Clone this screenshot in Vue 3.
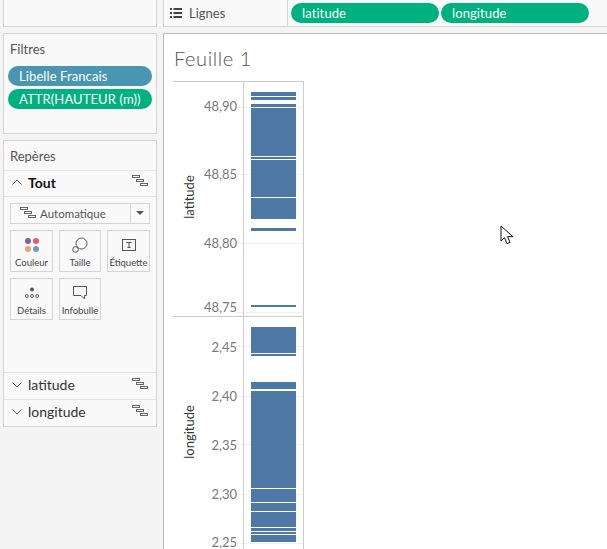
<template>
  <div class="workspace">
    <div class="side">
      <div class="card top-stub"></div>

      <div class="card filters">
        <div class="card-title">Filtres</div>
        <div class="pill blue">Libelle Francais</div>
        <div class="pill green">ATTR(HAUTEUR (m))</div>
      </div>

      <div class="card marks">
        <div class="card-title marks-title">Repères</div>
        <div class="mark-row active">
          <svg class="chev" viewBox="0 0 10 6"><path d="M0.5 5.5 5 1l4.5 4.5" /></svg>
          <span>Tout</span>
          <svg class="gantt" viewBox="0 0 17 12"><use href="#gantt-shape" /></svg>
        </div>

        <div class="mark-body">
          <div class="select">
            <div class="select-value">
              <svg class="gantt small" viewBox="0 0 17 12"><use href="#gantt-shape" /></svg>
              Automatique
            </div>
            <div class="select-arrow"></div>
          </div>

          <div class="tiles">
            <div class="tile">
              <svg viewBox="0 0 16 16" class="tile-icon">
                <circle cx="4" cy="4" r="3" fill="#7b6294" />
                <circle cx="12" cy="4" r="3" fill="#e8596b" />
                <circle cx="4" cy="12" r="3" fill="#eba06f" />
                <circle cx="12" cy="12" r="3" fill="#6d9ac7" />
              </svg>
              <span>Couleur</span>
            </div>
            <div class="tile">
              <svg viewBox="0 0 16 16" class="tile-icon stroke">
                <circle cx="9.500" cy="6.500" r="5.500" />
                <circle cx="3.500" cy="12.500" r="2.800" fill="#f9f9f9" />
              </svg>
              <span>Taille</span>
            </div>
            <div class="tile">
              <svg viewBox="0 0 16 16" class="tile-icon stroke">
                <rect x="1.500" y="2.500" width="13" height="11" />
                <path d="M5.500 6V5.500h5V6M8 5.500v5.500M6.500 10.500h3" />
              </svg>
              <span>Étiquette</span>
            </div>
            <div class="tile">
              <svg viewBox="0 0 16 16" class="tile-icon">
                <circle cx="8" cy="4.500" r="2" fill="#555" />
                <g fill="none" stroke="#555">
                  <circle cx="2.800" cy="11" r="1.500" />
                  <circle cx="8" cy="11" r="1.500" />
                  <circle cx="13.200" cy="11" r="1.500" />
                </g>
              </svg>
              <span>Détails</span>
            </div>
            <div class="tile">
              <svg viewBox="0 0 16 16" class="tile-icon stroke">
                <path d="M1.500 1.500h13v9h-2v3.500l-3.500-3.500H1.500z" />
              </svg>
              <span>Infobulle</span>
            </div>
          </div>
        </div>

        <div class="mark-row field" v-for="name in ['latitude', 'longitude']" :key="name">
          <svg class="chev" viewBox="0 0 10 6"><path d="M0.5 0.5 5 5l4.500-4.500" /></svg>
          <span>{{ name }}</span>
          <svg class="gantt" viewBox="0 0 17 12"><use href="#gantt-shape" /></svg>
        </div>
      </div>
    </div>

    <div class="main">
      <div class="card shelf">
        <div class="shelf-label">
          <svg class="list-icon" viewBox="0 0 12 10">
            <path d="M0 0h2v2H0zM0 4h2v2H0zM0 8h2v2H0zM3.500 0H12v2H3.500zM3.500 4H12v2H3.500zM3.500 8H12v2H3.500z" />
          </svg>
          Lignes
        </div>
        <div class="shelf-pills">
          <div class="pill green wide">latitude</div>
          <div class="pill green wide">longitude</div>
        </div>
      </div>

      <div class="sheet">
        <div class="sheet-title">Feuille 1</div>
        <svg class="chart" viewBox="164 81 443 468" width="443" height="468">
          <line v-for="y in grid" :key="y" x1="236" x2="303" :y1="y + 0.5" :y2="y + 0.5" class="grid-line" />
          <rect
            v-for="b in bars"
            :key="b[0]"
            x="251"
            width="45"
            :y="b[0]"
            :height="b[1] - b[0]"
            fill="#4e79a7"
          />
          <path class="axis" d="M173 81.500H303.500V549M243.500 81V549M173 316.500H303" />
          <text
            v-for="t in ticks"
            :key="t[0]"
            x="237"
            :y="t[1]"
            class="tick"
          >{{ t[0] }}</text>
          <text class="axis-title" transform="translate(194 197) rotate(-90)">latitude</text>
          <text class="axis-title" transform="translate(194 432) rotate(-90)">longitude</text>
        </svg>
      </div>
    </div>

    <svg class="cursor" viewBox="0 0 14 21" width="14" height="21">
      <path
        d="M1 1v15l3.500-3.300 2.500 6 3-1.300-2.500-5.700H13z"
        fill="#fff"
        stroke="#111"
        stroke-width="1"
      />
    </svg>

    <svg width="0" height="0" class="defs">
      <defs>
        <g id="gantt-shape" fill="none" stroke="#666" stroke-width="1">
          <rect x="0.500" y="0.500" width="7" height="2" />
          <rect x="4.500" y="4.500" width="7" height="2" />
          <rect x="8.500" y="8.500" width="7" height="2" />
        </g>
      </defs>
    </svg>
  </div>
</template>

<script setup>
const bars = [
  [92, 96], [97, 100], [104, 107], [108, 156], [157, 159], [160, 197], [198, 219],
  [228, 231], [305, 307],
  [327, 353], [354, 356], [382, 389], [391, 488], [489, 502], [503, 511],
  [512, 527], [528, 531], [532, 534], [535, 542],
];

const grid = [107, 174, 243, 312, 346, 396, 444, 494, 543];

const ticks = [
  ['48,90', 111], ['48,85', 179], ['48,80', 248], ['48,75', 312],
  ['2,45', 352], ['2,40', 401], ['2,35', 450], ['2,30', 499], ['2,25', 547],
];
</script>

<style>
html, body {
  background: #f4f4f4;
  overflow: hidden;
}
</style>

<style scoped>
.workspace {
  width: 607px;
  height: 549px;
  display: flex;
  gap: 6px;
  padding-left: 3px;
  box-sizing: border-box;
  font-family: Lato, "Open Sans", sans-serif;
  color: #555;
  background: #f4f4f4;
  overflow: hidden;
  position: relative;
}
.side {
  width: 154px;
  flex: none;
  display: flex;
  flex-direction: column;
  gap: 6px;
}
.main {
  flex: 1;
  display: flex;
  flex-direction: column;
  gap: 6px;
  min-width: 0;
}
.card {
  border: 1px solid #d4d4d4;
  background: #f9f9f9;
  box-sizing: border-box;
}
.top-stub {
  height: 27px;
  border-top: none;
}
.filters {
  height: 101px;
  padding: 0 4px;
}
.card-title {
  font-size: 13px;
  line-height: 30px;
  padding-left: 6px;
  color: #555;
}
.filters .card-title {
  margin-bottom: 2px;
  padding-left: 2px;
}
.pill {
  height: 20px;
  line-height: 20px;
  border-radius: 10px;
  font-size: 13px;
  color: #fff;
  padding-left: 11px;
  margin-bottom: 3px;
  box-sizing: border-box;
  letter-spacing: 0.1px;
}
.blue { background: #4996b2; }
.green { background: #00b180; }
.marks {
  height: 287px;
  display: flex;
  flex-direction: column;
}
.marks-title {
  height: 30px;
  box-sizing: border-box;
  border-bottom: 1px solid #e3e3e3;
}
.mark-row {
  height: 26px;
  flex: none;
  display: flex;
  align-items: center;
  padding: 0 7px 3px 8px;
  font-size: 14px;
  color: #333;
  border-bottom: 1px solid #e3e3e3;
  box-sizing: border-box;
}
.mark-row.field {
  height: 27px;
  padding-bottom: 3px;
}
.mark-row:last-child {
  height: 26px;
  border-bottom: none;
}
.mark-row.active {
  font-weight: 700;
  color: #111;
}
.mark-row span {
  margin-left: 6px;
  flex: 1;
}
.chev {
  width: 10px;
  height: 6px;
  fill: none;
  stroke: #666;
}
.gantt {
  width: 17px;
  height: 12px;
  margin-top: -2px;
}
.gantt.small {
  margin: -2px 3px 0 0;
}
.mark-body {
  flex: 1;
  padding: 6px 6px 0 6px;
  border-bottom: 1px solid #e3e3e3;
}
.select {
  height: 21px;
  display: flex;
  border: 1px solid #d4d4d4;
  background: #f9f9f9;
  box-sizing: border-box;
}
.select-value {
  flex: 1;
  display: flex;
  align-items: center;
  font-size: 11.5px;
  padding-left: 9px;
  border-right: 1px solid #d4d4d4;
}
.select-arrow {
  width: 18px;
  position: relative;
}
.select-arrow::after {
  content: "";
  position: absolute;
  left: 5px;
  top: 7px;
  border: 4px solid transparent;
  border-top: 4px solid #555;
}
.tiles {
  display: grid;
  grid-template-columns: 43px 42px 43px;
  grid-auto-rows: 42px;
  column-gap: 6px;
  row-gap: 6px;
  margin-top: 6px;
}
.tile {
  border: 1px solid #d4d4d4;
  box-sizing: border-box;
  display: flex;
  flex-direction: column;
  align-items: center;
  font-size: 9.5px;
  line-height: 12px;
  color: #444;
  white-space: nowrap;
  padding-top: 6px;
}
.tile span {
  margin-top: 4px;
}
.tile-icon {
  width: 16px;
  height: 16px;
  flex: none;
}
.tile-icon.stroke {
  fill: none;
  stroke: #555;
  stroke-width: 1;
}
.shelf {
  height: 27px;
  border-top: none;
  border-right: none;
  display: flex;
}
.shelf-label {
  width: 124px;
  flex: none;
  display: flex;
  align-items: center;
  padding-left: 6px;
  gap: 7px;
  font-size: 13px;
  border-right: 1px solid #d4d4d4;
  box-sizing: border-box;
}
.list-icon {
  width: 12px;
  height: 10px;
  fill: #444;
}
.shelf-pills {
  display: flex;
  gap: 2px;
  padding: 3px 0 0 3px;
}
.wide {
  width: 148px;
  margin: 0;
}
.sheet {
  flex: 1;
  border-top: 1px solid #b8b8b8;
  border-left: 1px solid #b8b8b8;
  background: #fff;
}
.sheet-title {
  height: 47px;
  box-sizing: border-box;
  padding: 11px 0 0 10px;
  font-size: 20px;
  line-height: 26px;
  font-weight: 300;
  color: #555;
  letter-spacing: 0.6px;
}
.chart {
  display: block;
}
.grid-line {
  stroke: #f1f1f1;
  stroke-width: 1;
}
.axis {
  fill: none;
  stroke: #cbcbcb;
  stroke-width: 1;
}
.tick {
  font-size: 13px;
  fill: #777;
  text-anchor: end;
}
.axis-title {
  font-size: 13px;
  fill: #333;
  text-anchor: middle;
}
.cursor {
  position: absolute;
  left: 500px;
  top: 225px;
}
.defs {
  position: absolute;
}
</style>
